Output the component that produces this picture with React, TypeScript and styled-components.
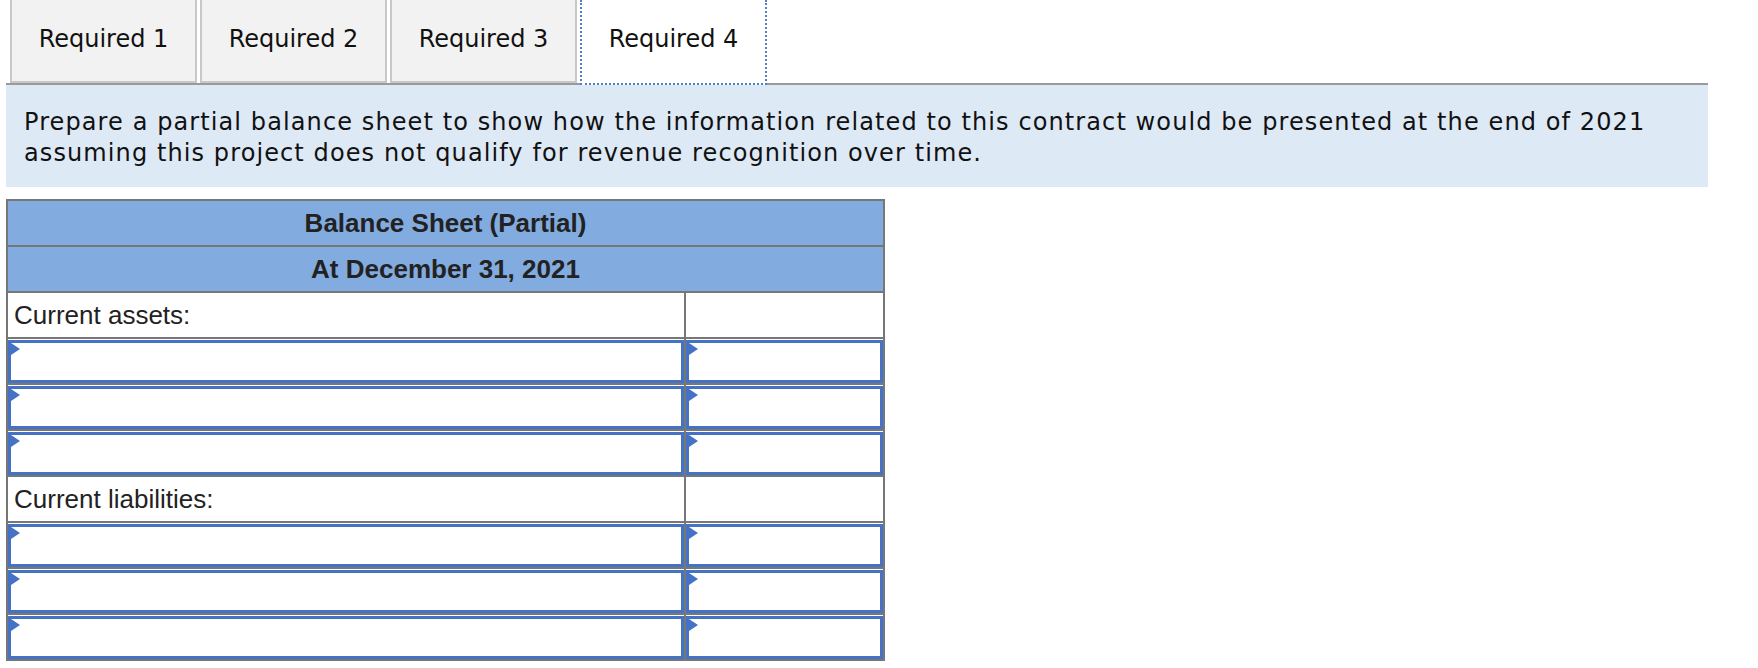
import React from 'react'
import styled, { createGlobalStyle } from 'styled-components'

const GlobalStyle = createGlobalStyle`
    body {
        margin: 0;
        background: #fff;
    }
`

const Page = styled.div`
    width: 1702px;
    padding-left: 6px;
`

const TabStrip = styled.div`
    display: flex;
    gap: 3px;
    height: 83px;
    padding-left: 4px;
    border-bottom: 2px solid #9a9a9a;
`

const Tab = styled.div<{ $active?: boolean }>`
    box-sizing: border-box;
    width: 187px;
    height: ${({ $active }) => ($active ? '85px' : '83px')};
    display: flex;
    align-items: center;
    justify-content: center;
    padding-bottom: 3px;
    font-family: 'DejaVu Sans', Verdana, sans-serif;
    font-size: 24px;
    color: #111;
    background: ${({ $active }) => ($active ? '#fff' : '#f2f2f2')};
    border: 2px solid #c8c8c8;
    border-top: none;
    ${({ $active }) =>
        $active &&
        `
        border: 2px dotted #4f7fc6;
        border-top: none;
        padding-bottom: 5px;
    `}
`

const Instructions = styled.div`
    background: #dee9f6;
    padding: 22px 18px 18px;
    font-family: 'DejaVu Sans', Verdana, sans-serif;
    font-size: 24px;
    letter-spacing: 1.1px;
    line-height: 31px;
    color: #111;
`

const Sheet = styled.table`
    margin-top: 12px;
    width: 879px;
    border-collapse: collapse;
    border: 2px solid #777;
    font-family: 'Liberation Sans', Arial, sans-serif;
    font-size: 26px;
    color: #222;
    tr {
        height: 46px;
    }
`

const HeadCell = styled.th`
    background: #82abe0;
    border: 2px solid #777;
    font-weight: 700;
    text-align: center;
    padding: 0;
`

const LabelCell = styled.td`
    border: 2px solid #777;
    padding: 0 6px;
    text-align: left;
`

const InputCell = styled.td<{ $w?: number }>`
    border: 2px solid #777;
    padding: 0;
    height: 46px;
    box-sizing: border-box;
    width: ${({ $w }) => ($w ? `${$w}px` : 'auto')};
`

const Entry = styled.div`
    position: relative;
    box-sizing: border-box;
    height: 43px;
    border: 3px solid #4472c4;
    background: #fff;
    &::before {
        content: '';
        position: absolute;
        left: 0;
        top: 0;
        border-top: 6px solid transparent;
        border-bottom: 6px solid transparent;
        border-left: 9px solid #4472c4;
    }
`

function EntryRow() {
    return (
        <tr>
            <InputCell $w={678}>
                <Entry />
            </InputCell>
            <InputCell>
                <Entry />
            </InputCell>
        </tr>
    )
}

function App() {
    return (
        <Page>
            <GlobalStyle />
            <TabStrip>
                <Tab>Required 1</Tab>
                <Tab>Required 2</Tab>
                <Tab>Required 3</Tab>
                <Tab $active>Required 4</Tab>
            </TabStrip>
            <Instructions>
                Prepare a partial balance sheet to show how the information related to this contract would be presented at the end of 2021
                <br />
                assuming this project does not qualify for revenue recognition over time.
            </Instructions>
            <Sheet>
                <tbody>
                    <tr>
                        <HeadCell colSpan={2}>Balance Sheet (Partial)</HeadCell>
                    </tr>
                    <tr>
                        <HeadCell colSpan={2}>At December 31, 2021</HeadCell>
                    </tr>
                    <tr>
                        <LabelCell>Current assets:</LabelCell>
                        <LabelCell />
                    </tr>
                    <EntryRow />
                    <EntryRow />
                    <EntryRow />
                    <tr>
                        <LabelCell>Current liabilities:</LabelCell>
                        <LabelCell />
                    </tr>
                    <EntryRow />
                    <EntryRow />
                    <EntryRow />
                </tbody>
            </Sheet>
        </Page>
    )
}

export default App
